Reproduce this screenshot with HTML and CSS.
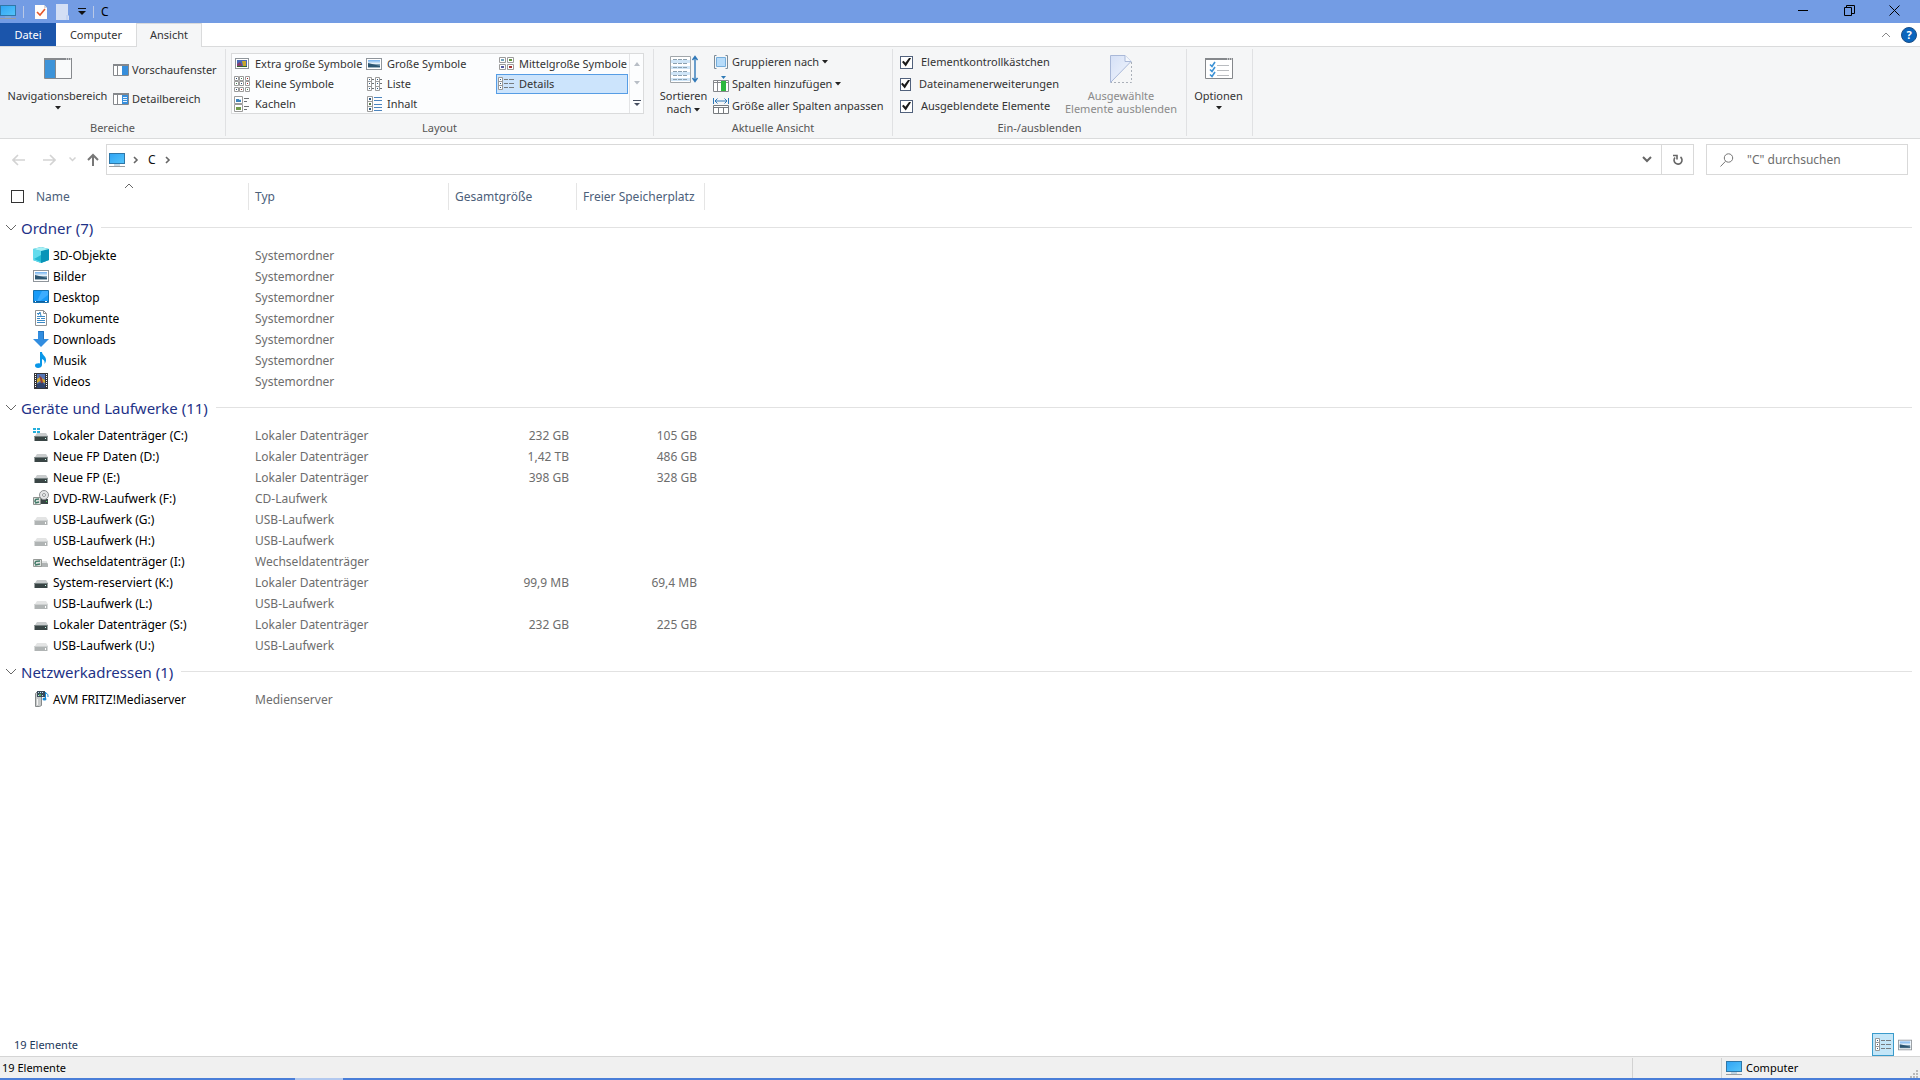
FILE: index.html
```html
<!DOCTYPE html>
<html lang="de">
<head>
<meta charset="utf-8">
<meta name="viewport" content="width=device-width, initial-scale=1">
<title>C</title>
<link rel="stylesheet" href="styles.css">
</head>
<body>
<svg class="defs" aria-hidden="true">
  <defs>
    <linearGradient id="g-screen" x1="0" y1="0" x2="1" y2="1"><stop offset="0" stop-color="#2fa3f4"/><stop offset="1" stop-color="#55c5fa"/></linearGradient>
    <linearGradient id="g-sky" x1="0" y1="0" x2="0" y2="1"><stop offset="0" stop-color="#6fb0f0"/><stop offset=".45" stop-color="#e8f2f8"/><stop offset=".6" stop-color="#5f86a0"/><stop offset="1" stop-color="#a9bcc6"/></linearGradient>
    <linearGradient id="g-hide" x1="0" y1="0" x2="1" y2="1"><stop offset="0" stop-color="#d5e0f6"/><stop offset="1" stop-color="#f2f6fd"/></linearGradient>
  </defs>
  <symbol id="computer" viewBox="0 0 16 16"><rect x=".5" y="1.5" width="15" height="10" fill="url(#g-screen)" stroke="#2f77a8"/><path d="M5 13h6" stroke="#8ab4cf"/><path d="M0 14.500h16" stroke="#9a9da0"/></symbol>
  <symbol id="picture" viewBox="0 0 16 16"><rect x=".5" y="2.500" width="15" height="11" fill="#fff" stroke="#8f959b"/><rect x="2" y="4" width="12" height="8" fill="url(#g-sky)"/><path d="M2 7l4 1 8 2v1H2z" fill="#2c5672"/></symbol>
  <symbol id="mixed" viewBox="0 0 16 16"><rect x="1.500" y="2.500" width="13" height="10" fill="#fff" stroke="#8f959b"/><rect x="3" y="4" width="10" height="7" fill="#4668b8"/><path d="M3 8l3-2 2 3v2H3z" fill="#833f70"/><path d="M8 5h4v5H9z" fill="#c7a62c"/><path d="M3 10h10v1H3z" fill="#346332"/></symbol>
  <symbol id="small" viewBox="0 0 16 16"><path d="M.5.5h4v4h-4zM5.500.5h4v4h-4zM11.500.5h4v4h-4zM.5 5.500h4v4h-4zM5.500 5.500h4v4h-4zM11.500 5.500h4v4h-4zM.5 11.500h4v4h-4zM5.500 11.500h4v4h-4zM11.500 11.500h4v4h-4z" fill="#fff" stroke="#9b9b9b"/><path d="M2 2h1v1H2zM7 7h1v1H7zM2 13h1v1H2z" fill="#27466a"/><path d="M7 2h1v1H7zM2 7h1v1H2zM13 13h1v1h-1z" fill="#408052"/><path d="M13 2h1v1h-1zM13 7h1v1h-1zM7 13h1v1H7z" fill="#a22"/></symbol>
  <symbol id="tiles" viewBox="0 0 16 16"><path d="M.5.5h8v7h-8zM.5 8.500h8v7h-8z" fill="#fff" stroke="#9b9b9b"/><path d="M2 3h5v3H2z" fill="#3e84bd"/><path d="M2 11h5v3H2z" fill="#719b4b"/><path d="M5 3h2v1H5z" fill="#bdddf1"/><path d="M10 2.500h5M10 5.500h3M10 10.500h5M10 13.500h3" stroke="#6d7174"/></symbol>
  <symbol id="list" viewBox="0 0 16 16"><path d="M1.500 1.500h4v13h-4zM1.500 5.500h4M1.500 10.500h4M9.500 1.500h4v13h-4zM9.500 5.500h4M9.500 10.500h4" fill="#fff" stroke="#9b9b9b"/><path d="M3 3h1v1H3zM3 7h1v1H3zM3 12h1v1H3zM11 3h1v1h-1zM11 7h1v1h-1zM11 12h1v1h-1z" fill="#315c83"/><path d="M6 3.500h2M6 7.500h2M6 12.500h2M14 3.500h2M14 7.500h2M14 12.500h2" stroke="#6d7174"/></symbol>
  <symbol id="content" viewBox="0 0 16 16"><path d="M1.500.5h5v15h-5zM1.500 5.500h5M1.500 10.500h5" fill="#fff" stroke="#9b9b9b"/><path d="M3 2h2v2H3zM3 12h2v2H3z" fill="#315c83"/><path d="M3 7h2v2H3z" fill="#557949"/><path d="M8 1.500h8M8 4.500h8M8 8.500h8M8 11.500h8M8 14.500h8" stroke="#4c84bd"/></symbol>
  <symbol id="medium" viewBox="0 0 16 16"><path d="M1.500 1.500h6v5h-6zM9.500 1.500h6v5h-6zM1.500 8.500h6v5h-6zM9.500 8.500h6v5h-6z" fill="#fff" stroke="#9b9b9b"/><path d="M3 3h3v2H3z" fill="#74a3bc"/><path d="M11 3h3v2h-3z" fill="#63953e"/><path d="M3 10h3v2H3z" fill="#5359a0"/><path d="M11 10h3v2h-3z" fill="#a53232"/></symbol>
  <symbol id="details" viewBox="0 0 16 16"><path d="M.5 1.500h4v12h-4zM.5 5.500h4M.5 9.500h4" fill="#fff" stroke="#999"/><path d="M2 3h1v1H2zM2 7h1v1H2zM2 11h1v1H2z" fill="#315c83"/><path d="M6 3.500h4M11 3.500h5M6 7.500h4M11 7.500h5M6 11.500h4M11 11.500h5" stroke="#777c80"/></symbol>
  <symbol id="navpane" viewBox="0 0 28 22"><path d="M.5.5h27v20H.5z" fill="#f9fafb" stroke="#86898d"/><path d="M0 0h28v2H0z" fill="#86898d"/><path d="M1 2h10v18H1z" fill="#3d93d8"/><path d="M11.500 2v18" stroke="#86898d"/><path d="M22 1h1M24 1h1M26 1h1" stroke="#fff"/></symbol>
  <symbol id="preview" viewBox="0 0 16 12"><path d="M.5.5h15v11H.5z" fill="#fff" stroke="#85888c"/><path d="M0 0h16v2H0zM4 2h1v9H4z" fill="#85888c"/><path d="M9 2h6v9H9z" fill="#378edb"/></symbol>
  <symbol id="detailpane" viewBox="0 0 16 12"><path d="M.5.5h15v11H.5z" fill="#fff" stroke="#85888c"/><path d="M0 0h16v2H0zM4 2h1v9H4z" fill="#85888c"/><path d="M9 2h6v9H9z" fill="#378edb"/><path d="M10 4.500h4M10 6.500h4M10 8.500h4" stroke="#e6f3ff"/></symbol>
  <symbol id="sort" viewBox="0 0 28 28"><path d="M.5 1.500h20v26H.5z" fill="#fff" stroke="#a1a6aa"/><path d="M1 5h19v3H1zM1 11h19v3H1zM1 17h19v3H1zM1 23h19v3H1z" fill="#cfe5f7"/><path d="M3 4.500h15M3 8.500h15M3 12.500h15M3 16.500h15M3 20.500h15M3 24.500h15" stroke="#8ca0af" stroke-dasharray="4 1"/><path d="M25 2v24M22.500 5L25 1.500 27.500 5M22.500 23l2.500 3.500 2.500-3.500" fill="none" stroke="#2f78b8" stroke-width="1.400"/></symbol>
  <symbol id="group" viewBox="0 0 16 16"><path d="M3.500 1.500h-2v13h2M12.500 1.500h2v13h-2" fill="none" stroke="#7b8b98"/><path d="M3.500 3.500h9v9h-9z" fill="#b7dcfa" stroke="#76aedb"/></symbol>
  <symbol id="addcol" viewBox="0 0 16 16"><path d="M.5 4.500h15v11H.5zM4.500 4v12M.5 6.500h15" fill="#fff" stroke="#85888c"/><path d="M8 5h5v10H8z" fill="#2cb83d"/><path d="M8 0h5l-2.500 3z" fill="#2e7ab6"/></symbol>
  <symbol id="fitcol" viewBox="0 0 16 16"><path d="M.5 0v6M15.500 0v6M2 3h12M4.500.5L2 3l2.500 2.500M11.500.5L14 3l-2.500 2.500" fill="none" stroke="#2e78b8"/><path d="M.5 7.500h15v8H.5zM.5 9.500h15M5.500 9v6M10.500 9v6" fill="#fff" stroke="#777b7f"/></symbol>
  <symbol id="hide" viewBox="0 0 22 28"><path d="M.5.5H15l6 6L.5 27.500z" fill="url(#g-hide)" stroke="#a9b8d8"/><path d="M15 .5v6h6" fill="#f5f8fc" stroke="#a9b8d8"/><path d="M21.500 7v20.500H1" fill="none" stroke="#aab0b9" stroke-dasharray="2 2"/></symbol>
  <symbol id="options" viewBox="0 0 28 22"><path d="M.5.5h27v20H.5z" fill="#fff" stroke="#85888c"/><path d="M0 0h28v2H0z" fill="#85888c"/><path d="M22 1h1M24 1h1M26 1h1" stroke="#fff"/><path d="M5 6.500l2 2L10 4M5 11.500l2 2L10 9M5 16.500l2 2L10 14" fill="none" stroke="#3c92d6" stroke-width="1.600"/><path d="M12 7.500h12M12 12.500h12M12 17.500h12" stroke="#b9bcc0"/></symbol>
  <symbol id="down" viewBox="0 0 6 4"><path d="M0 0h6L3 3.500z" fill="currentColor"/></symbol>
  <symbol id="objects" viewBox="0 0 16 16"><path d="M0 2l8-2 8 2v11l-8 3-8-3z" fill="#14a5c6"/><path d="M0 2l8 2v12l-8-3z" fill="#63dced"/><path d="M8 4l8-2v11l-8 3z" fill="#0994b8"/><path d="M0 2l8-2 8 2-8 2z" fill="#a8f1f5"/><path d="M1 12l7-4v7z" fill="#24b8d2"/></symbol>
  <symbol id="desktop" viewBox="0 0 16 16"><path d="M.5 1.500h15v12H.5z" fill="#199bf8" stroke="#1470ae"/><path d="M9 2h6v4l-8 6H4z" fill="#3cadff"/><path d="M1 12.500h14" stroke="#0b60a3"/><path d="M2 12h1v1H2zM12 12h2v1h-2z" fill="#fff"/></symbol>
  <symbol id="document" viewBox="0 0 16 16"><path d="M2.500.5h8l3 3v12h-11z" fill="#fff" stroke="#8f9294"/><path d="M10.500.5v3h3" fill="none" stroke="#8f9294"/><path d="M4 3.500h3M4 6.500h8M4 8.500h3M8 8.500h4M4 10.500h8M4 12.500h8" stroke="#3b8ac6"/><path d="M5 5l2-3 1 4" fill="none" stroke="#3b8ac6"/></symbol>
  <symbol id="download" viewBox="0 0 16 16"><path d="M5 0h6v8h5l-8 8-8-8h5z" fill="#318de0"/><path d="M5.500.5h5v8" fill="none" stroke="#2375bf"/></symbol>
  <symbol id="music" viewBox="0 0 16 16"><path d="M7 0h2c0 3 4 4 4 8 0 1-.5 3-1.500 4 .5-3-.5-4-2.500-5v6c0 2-2 3-4 3s-3-1-3-2.500C2 12 4 11 7 11.500z" fill="#0997e8"/></symbol>
  <symbol id="video" viewBox="0 0 16 16"><path d="M1 0h14v16H1z" fill="#35363b"/><path d="M4 1h8v14H4z" fill="#5575b5"/><path d="M4 6l3-2 5 3v3l-5-2-3 2z" fill="#d3ad33"/><path d="M4 11l5-2 3 3v3H4z" fill="#31446d"/><path d="M6 2l3 3 1 5H8z" fill="#923d39"/><path d="M2.500 1v14M13.500 1v14" stroke="#fff" stroke-dasharray="1 1"/></symbol>
  <symbol id="drive" viewBox="0 0 16 16"><path d="M4 6h9l2 3H2z" fill="#c9cccd"/><path d="M1.500 9h13v5h-13z" fill="#394545"/><path d="M1.500 9h13v1h-13z" fill="#758080"/><path d="M12 11h1v1h-1z" fill="#cfe"/></symbol>
  <symbol id="usb" viewBox="0 0 16 16"><path d="M4 6h9l2 3H2z" fill="#e3e4e4"/><path d="M1.500 9h13v5h-13z" fill="#b0b4b4"/><path d="M1.500 9h13v1h-13z" fill="#cdd0d0"/><path d="M12 11h1v2h-1z" fill="#fff"/></symbol>
  <symbol id="sysdrive" viewBox="0 0 16 16"><use href="#drive"/><path d="M0 1h3v2H0zM4 1h3v2H4zM0 4h3v2H0zM4 4h3v2H4z" fill="#25afdc"/></symbol>
  <symbol id="dvd" viewBox="0 0 16 16"><path d="M6 9h9v5H6z" fill="#394545"/><circle cx="11" cy="5" r="4.500" fill="#e5e6e7" stroke="#8e9092"/><circle cx="11" cy="5" r="1.500" fill="#fff" stroke="#96999b"/><path d="M.5 7.500h7v7h-7z" fill="#dfe2df" stroke="#8d918e"/><path d="M2 12c0-3 1-3 4-3M2 13l4-1" fill="none" stroke="#3e7866" stroke-width="1.500"/><path d="M13 11h1v1h-1z" fill="#50e160"/></symbol>
  <symbol id="removable" viewBox="0 0 16 16"><path d="M7 8h6l2 3v3H7z" fill="#b0b4b4"/><path d="M8 8h5l1 2H7z" fill="#e0e2e2"/><path d="M.5 6.500h8v7h-8z" fill="#dfe2df" stroke="#969a97"/><path d="M2 11c0-3 1-3 5-3M2 12l5-1" fill="none" stroke="#3e7866" stroke-width="1.500"/></symbol>
  <symbol id="media" viewBox="0 0 16 16"><path d="M2.500 2.500l2-2h4v14l-2 1h-4z" fill="#c7caca" stroke="#85898a"/><path d="M4.500 8v6" stroke="#f4f4f4"/><path d="M4 0h8v6H4z" fill="#384957"/><path d="M5 1h1v1H5zM7 1h1v1H7zM9 1h1v1H9zM5 4h1v1H5zM9 4h1v1H9z" fill="#b8dff4"/><path d="M6 3h2v2H6z" fill="#58a860"/><path d="M12.500 1v7M13 2c2 1 2 2 2 4" fill="none" stroke="#1688d4"/><ellipse cx="11.500" cy="8" rx="2" ry="1.500" fill="#1688d4"/></symbol>
  <symbol id="chev-right" viewBox="0 0 6 8"><path d="M1 1l3 3-3 3" fill="none" stroke="currentColor" stroke-width="1.600"/></symbol>
  <symbol id="chev-down" viewBox="0 0 12 8"><path d="M1 1l5 5 5-5" fill="none" stroke="currentColor"/></symbol>
  <symbol id="chev-up" viewBox="0 0 10 6"><path d="M1 5l4-4 4 4" fill="none" stroke="currentColor"/></symbol>
  <symbol id="arrow" viewBox="0 0 14 12"><path d="M1 6h12M6 1L1 6l5 5" fill="none" stroke="currentColor" stroke-width="1.600"/></symbol>
</svg>

<div class="window">
  <header class="titlebar">
    <svg class="i16"><use href="#computer"/></svg>
    <span class="tick"></span>
    <button class="quick" aria-label="Eigenschaften"><svg width="12" height="14" viewBox="0 0 12 14"><path d="M0 0h9l3 3v11H0z" fill="#fffdfb"/><path d="M9 0v3h3" fill="#dcd8d6"/><path d="M2 7l3 3 5-6" fill="none" stroke="#e4572b" stroke-width="1.600"/></svg></button>
    <button class="quick" aria-label="Neuer Ordner"><svg width="13" height="16" viewBox="0 0 13 16"><path d="M0 0h12v11l1 1v4H0z" fill="#d3dff5"/><path d="M11 11v5" stroke="#b5c9ee"/></svg></button>
    <button class="quick quick-more" aria-label="Symbolleiste anpassen"><svg width="8" height="7" viewBox="0 0 8 7"><path d="M0 .5h8" stroke="#111"/><path d="M0 3h8L4 7z" fill="#111"/></svg></button>
    <span class="tick"></span>
    <h1 class="title">C</h1>
    <div class="winbuttons">
      <button aria-label="Minimieren"><svg width="11" height="11" viewBox="0 0 11 11"><path d="M0 5.500h10" stroke="#000"/></svg></button>
      <button aria-label="Verkleinern"><svg width="11" height="11" viewBox="0 0 11 11"><path d="M.5 2.500h7v8h-7zM2.500 2V.5h8v8H8" fill="none" stroke="#000"/></svg></button>
      <button aria-label="Schließen"><svg width="11" height="11" viewBox="0 0 11 11"><path d="M.5.5l10 10M10.500.5l-10 10" stroke="#000"/></svg></button>
    </div>
  </header>

  <nav class="tabs">
    <button class="tab tab-file">Datei</button>
    <button class="tab tab-computer">Computer</button>
    <button class="tab tab-active">Ansicht</button>
    <div class="tabs-end">
      <button class="collapse" aria-label="Menüband minimieren"><svg width="10" height="6"><use href="#chev-up"/></svg></button>
      <button class="help" aria-label="Hilfe">?</button>
    </div>
  </nav>

  <div class="ribbon">
    <section class="rgroup g-panes">
      <div class="rbody">
        <button class="big big-nav"><svg class="i28"><use href="#navpane"/></svg><span>Navigationsbereich</span><svg class="caret"><use href="#down"/></svg></button>
        <div class="stack stack-wide">
          <button class="cmd"><svg width="16" height="12"><use href="#preview"/></svg>Vorschaufenster</button>
          <button class="cmd"><svg width="16" height="12"><use href="#detailpane"/></svg>Detailbereich</button>
        </div>
      </div>
      <h2>Bereiche</h2>
    </section>
    <section class="rgroup g-layout">
      <div class="rbody">
        <div class="gallery">
          <div class="views">
            <button class="view"><svg class="i16"><use href="#mixed"/></svg>Extra große Symbole</button>
            <button class="view"><svg class="i16"><use href="#picture"/></svg>Große Symbole</button>
            <button class="view"><svg class="i16"><use href="#medium"/></svg>Mittelgroße Symbole</button>
            <button class="view"><svg class="i16"><use href="#small"/></svg>Kleine Symbole</button>
            <button class="view"><svg class="i16"><use href="#list"/></svg>Liste</button>
            <button class="view view-on"><svg class="i16"><use href="#details"/></svg>Details</button>
            <button class="view"><svg class="i16"><use href="#tiles"/></svg>Kacheln</button>
            <button class="view"><svg class="i16"><use href="#content"/></svg>Inhalt</button>
          </div>
          <div class="spinner">
            <button class="off" aria-label="Nach oben"><svg width="6" height="4" viewBox="0 0 6 4"><path d="M0 4h6L3 0z" fill="currentColor"/></svg></button>
            <button class="off" aria-label="Nach unten"><svg class="caret"><use href="#down"/></svg></button>
            <button aria-label="Mehr"><svg width="8" height="7" viewBox="0 0 8 7"><path d="M0 .5h8" stroke="currentColor"/><path d="M1 3h6L4 6z" fill="currentColor"/></svg></button>
          </div>
        </div>
      </div>
      <h2>Layout</h2>
    </section>
    <section class="rgroup g-current">
      <div class="rbody">
        <button class="big big-sort"><svg class="i28 tall"><use href="#sort"/></svg><span>Sortieren<br>nach <svg class="caret"><use href="#down"/></svg></span></button>
        <div class="stack">
          <button class="cmd"><svg class="i16"><use href="#group"/></svg>Gruppieren nach <svg class="caret"><use href="#down"/></svg></button>
          <button class="cmd"><svg class="i16"><use href="#addcol"/></svg>Spalten hinzufügen <svg class="caret"><use href="#down"/></svg></button>
          <button class="cmd"><svg class="i16"><use href="#fitcol"/></svg>Größe aller Spalten anpassen</button>
        </div>
      </div>
      <h2>Aktuelle Ansicht</h2>
    </section>
    <section class="rgroup g-show">
      <div class="rbody">
        <div class="stack">
          <label class="check"><input type="checkbox" checked>Elementkontrollkästchen</label>
          <label class="check"><input type="checkbox" checked>Dateinamenerweiterungen</label>
          <label class="check"><input type="checkbox" checked>Ausgeblendete Elemente</label>
        </div>
        <button class="big big-hide" disabled><svg class="i28 tall"><use href="#hide"/></svg><span>Ausgewählte<br>Elemente ausblenden</span></button>
      </div>
      <h2>Ein-/ausblenden</h2>
    </section>
    <section class="rgroup g-options">
      <div class="rbody">
        <button class="big"><svg class="i28"><use href="#options"/></svg><span>Optionen</span><svg class="caret"><use href="#down"/></svg></button>
      </div>
    </section>
  </div>

  <div class="addressbar">
    <div class="history">
      <button class="pale" aria-label="Zurück"><svg width="14" height="12"><use href="#arrow"/></svg></button>
      <button class="pale" aria-label="Vorwärts"><svg class="flip" width="14" height="12"><use href="#arrow"/></svg></button>
      <button class="pale recent" aria-label="Zuletzt besucht"><svg width="7" height="5" viewBox="0 0 7 5"><path d="M.5.5l3 3 3-3" fill="none" stroke="currentColor" stroke-width="1.500"/></svg></button>
      <button class="up" aria-label="Nach oben"><svg width="12" height="14" viewBox="0 0 12 14"><path d="M6 13V2M1 7l5-5 5 5" fill="none" stroke="currentColor" stroke-width="2"/></svg></button>
    </div>
    <div class="path">
      <svg class="i16"><use href="#computer"/></svg>
      <svg class="sep" width="6" height="8"><use href="#chev-right"/></svg>
      <a href="#c">C</a>
      <svg class="sep" width="6" height="8"><use href="#chev-right"/></svg>
      <button class="drop" aria-label="Verlauf"><svg width="10" height="7" viewBox="0 0 10 7"><path d="M1 1l4 4 4-4" fill="none" stroke="currentColor" stroke-width="2"/></svg></button>
      <button class="reload" aria-label="Aktualisieren"><svg width="12" height="12" viewBox="0 0 12 12"><path d="M8.500 3A4 4 0 1 1 3 3.500M1 1.500h4v4" fill="none" stroke="currentColor" stroke-width="1.600"/></svg></button>
    </div>
    <label class="search">
      <svg width="14" height="14" viewBox="0 0 14 14"><circle cx="8.500" cy="5" r="4.200" fill="none" stroke="#777"/><path d="M5.500 8.300L.5 13.500" stroke="#777"/></svg>
      <input type="text" placeholder="&quot;C&quot; durchsuchen" aria-label="C durchsuchen">
    </label>
  </div>

  <main class="files">
    <table>
      <colgroup><col class="c-name"><col class="c-type"><col class="c-size"><col class="c-size"><col></colgroup>
      <thead>
        <tr>
          <th><div class="head head-name"><input type="checkbox" aria-label="Alle auswählen">Name<svg class="sorted" width="10" height="6"><use href="#chev-up"/></svg></div></th>
          <th><div class="head">Typ</div></th>
          <th><div class="head">Gesamtgröße</div></th>
          <th><div class="head">Freier Speicherplatz</div></th>
          <td></td>
        </tr>
      </thead>
      <tbody>
        <tr class="group"><th colspan="5"><div class="ghead"><svg width="12" height="8"><use href="#chev-down"/></svg>Ordner (7)</div></th></tr>
        <tr><td><div class="name"><svg class="i16"><use href="#objects"/></svg>3D-Objekte</div></td><td>Systemordner</td><td></td><td></td></tr>
        <tr><td><div class="name"><svg class="i16"><use href="#picture"/></svg>Bilder</div></td><td>Systemordner</td><td></td><td></td></tr>
        <tr><td><div class="name"><svg class="i16"><use href="#desktop"/></svg>Desktop</div></td><td>Systemordner</td><td></td><td></td></tr>
        <tr><td><div class="name"><svg class="i16"><use href="#document"/></svg>Dokumente</div></td><td>Systemordner</td><td></td><td></td></tr>
        <tr><td><div class="name"><svg class="i16"><use href="#download"/></svg>Downloads</div></td><td>Systemordner</td><td></td><td></td></tr>
        <tr><td><div class="name"><svg class="i16"><use href="#music"/></svg>Musik</div></td><td>Systemordner</td><td></td><td></td></tr>
        <tr><td><div class="name"><svg class="i16"><use href="#video"/></svg>Videos</div></td><td>Systemordner</td><td></td><td></td></tr>
      </tbody>
      <tbody>
        <tr class="group"><th colspan="5"><div class="ghead"><svg width="12" height="8"><use href="#chev-down"/></svg>Geräte und Laufwerke (11)</div></th></tr>
        <tr><td><div class="name"><svg class="i16"><use href="#sysdrive"/></svg>Lokaler Datenträger (C:)</div></td><td>Lokaler Datenträger</td><td>232 GB</td><td>105 GB</td></tr>
        <tr><td><div class="name"><svg class="i16"><use href="#drive"/></svg>Neue FP Daten (D:)</div></td><td>Lokaler Datenträger</td><td>1,42 TB</td><td>486 GB</td></tr>
        <tr><td><div class="name"><svg class="i16"><use href="#drive"/></svg>Neue FP (E:)</div></td><td>Lokaler Datenträger</td><td>398 GB</td><td>328 GB</td></tr>
        <tr><td><div class="name"><svg class="i16"><use href="#dvd"/></svg>DVD-RW-Laufwerk (F:)</div></td><td>CD-Laufwerk</td><td></td><td></td></tr>
        <tr><td><div class="name"><svg class="i16"><use href="#usb"/></svg>USB-Laufwerk (G:)</div></td><td>USB-Laufwerk</td><td></td><td></td></tr>
        <tr><td><div class="name"><svg class="i16"><use href="#usb"/></svg>USB-Laufwerk (H:)</div></td><td>USB-Laufwerk</td><td></td><td></td></tr>
        <tr><td><div class="name"><svg class="i16"><use href="#removable"/></svg>Wechseldatenträger (I:)</div></td><td>Wechseldatenträger</td><td></td><td></td></tr>
        <tr><td><div class="name"><svg class="i16"><use href="#drive"/></svg>System-reserviert (K:)</div></td><td>Lokaler Datenträger</td><td>99,9 MB</td><td>69,4 MB</td></tr>
        <tr><td><div class="name"><svg class="i16"><use href="#usb"/></svg>USB-Laufwerk (L:)</div></td><td>USB-Laufwerk</td><td></td><td></td></tr>
        <tr><td><div class="name"><svg class="i16"><use href="#drive"/></svg>Lokaler Datenträger (S:)</div></td><td>Lokaler Datenträger</td><td>232 GB</td><td>225 GB</td></tr>
        <tr><td><div class="name"><svg class="i16"><use href="#usb"/></svg>USB-Laufwerk (U:)</div></td><td>USB-Laufwerk</td><td></td><td></td></tr>
      </tbody>
      <tbody>
        <tr class="group"><th colspan="5"><div class="ghead"><svg width="12" height="8"><use href="#chev-down"/></svg>Netzwerkadressen (1)</div></th></tr>
        <tr><td><div class="name"><svg class="i16"><use href="#media"/></svg>AVM FRITZ!Mediaserver</div></td><td>Medienserver</td><td></td><td></td></tr>
      </tbody>
    </table>
  </main>

  <div class="infobar">
    <span>19 Elemente</span>
    <div class="modes">
      <button class="mode mode-on" aria-label="Details"><svg class="i16"><use href="#details"/></svg></button>
      <button class="mode" aria-label="Große Symbole"><svg width="14" height="14"><use href="#picture"/></svg></button>
    </div>
  </div>
  <footer class="statusbar">
    <span class="count">19 Elemente</span>
    <span class="zone"><svg class="i16"><use href="#computer"/></svg>Computer</span>
    <svg class="grip" width="8" height="8" viewBox="0 0 8 8"><path d="M6 0h2v2H6zM3 3h2v2H3zM6 3h2v2H6zM0 6h2v2H0zM3 6h2v2H3zM6 6h2v2H6z" fill="#b9b9b9"/></svg>
  </footer>
  <div class="edge"><span></span></div>
</div>
</body>
</html>
```
FILE: styles.css
```css
* { box-sizing: border-box; }
body {
  margin: 0;
  font: 12px/16px "Noto Sans", "Open Sans", sans-serif;
  color: #000;
  background: #fff;
}
button, input { font: inherit; color: inherit; }
button { padding: 0; border: 0; background: none; }
h1, h2 { margin: 0; font: inherit; }
svg { flex: none; display: block; }
.defs { position: absolute; width: 0; height: 0; }
.i16 { width: 16px; height: 16px; }
.i28 { width: 28px; height: 22px; }
.caret { width: 6px; height: 4px; }
.window { min-height: 100vh; display: flex; flex-direction: column; }

/* Title bar */
.titlebar { height: 23px; display: flex; align-items: center; background: #739ce4; }
.tick { width: 1px; height: 12px; margin-left: 7px; background: #b9c8e6; }
.quick { margin-left: 11px; }
.quick + .quick { margin-left: 9px; }
.title { margin-left: 7px; line-height: 23px; }
.winbuttons { display: flex; margin-left: auto; align-self: stretch; padding: 0 4px 3px 0; }
.winbuttons button { width: 46px; display: grid; place-items: center; }
.winbuttons button:last-child { width: 44px; }

/* Tabs */
.tabs { height: 24px; display: flex; font-size: 11px; color: #333; border-bottom: 1px solid #dadbdc; }
.tab { height: 23px; }
.tab-file { width: 56px; background: #1b55ab; color: #fff; }
.tab-computer { width: 80px; }
.tab-active { width: 66px; height: 24px; padding-bottom: 2px; background: #f5f6f7; border: solid #dadbdc; border-width: 1px 1px 0; }
.tabs-end { display: flex; align-items: center; gap: 10px; margin-left: auto; padding-right: 3px; }
.collapse { color: #888; }
.help { width: 16px; height: 16px; border-radius: 50%; background: #0a65bd; border: 1px solid #1d4f86; color: #fff; font-weight: 700; line-height: 14px; }

/* Ribbon */
.ribbon { height: 92px; display: flex; padding-top: 2px; background: #f5f6f7; border-bottom: 1px solid #dadbdc; font-size: 11px; color: #333; }
.rgroup { display: flex; flex-direction: column; height: 87px; border-right: 1px solid #e0e1e3; }
.rbody { display: flex; height: 72px; padding-top: 2px; }
.rgroup h2 { text-align: center; color: #555; }
.g-panes { width: 226px; }
.g-layout { width: 428px; }
.g-current { width: 239px; }
.g-show { width: 294px; }
.g-options { width: 66px; }
.big { display: flex; flex-direction: column; align-items: center; padding-top: 7px; line-height: 13px; }
.big > span { margin: 9px 0 4px; }
.big .caret { color: #222; }
.big span .caret, .cmd .caret { display: inline-block; vertical-align: middle; color: #222; }
.tall { height: 28px; }
.big-nav { width: 113px; padding-left: 2px; }
.big-sort { width: 59px; padding-top: 4px; }
.big-sort > span, .big-hide > span { margin-top: 6px; }
.big-hide { padding-top: 4px; width: 130px; color: #8a8a8a; }
.g-options .big { width: 63px; }
.stack { display: flex; flex-direction: column; }
.stack-wide { padding-top: 4px; }
.cmd, .check { display: flex; align-items: center; height: 22px; white-space: nowrap; gap: 3px; }
.stack-wide .cmd { height: 29px; }
.g-show .stack { width: 163px; padding-left: 7px; }
.check { gap: 8px; }
.check input, .head-name input { appearance: none; width: 13px; height: 13px; margin: 0; border: 1px solid #51617c; background: #fff; }
.check input { display: grid; place-items: center; }
.check input:checked::before { content: ""; width: 9px; height: 9px; background: #1a1a1a; clip-path: polygon(0 50%, 18% 36%, 38% 58%, 82% 0, 100% 8%, 42% 100%); }
.gallery { display: flex; width: 413px; height: 61px; margin-left: 5px; background: #fcfdfe; border: 1px solid #dadbdc; margin-top: 2px; }
.views { display: grid; grid-template-columns: repeat(3, 132px); grid-auto-rows: 20px; width: 397px; }
.view { display: flex; align-items: center; gap: 5px; padding: 0 0 1px 1px; white-space: nowrap; border: 1px solid transparent; }
.view-on { background: #cce4fc; border-color: #569de5; }
.spinner { flex: 1; display: grid; grid-template-rows: repeat(3, 1fr); border-left: 1px solid #e3e4e6; color: #444e60; }
.spinner button { display: grid; place-items: center; }
.spinner .off { color: #b8bec6; }

/* Address bar */
.addressbar { display: flex; padding: 5px 12px 0 0; height: 36px; }
.history { width: 106px; display: flex; align-items: center; padding-left: 12px; color: #777; }
.history .pale { color: #d3d3d3; }
.history button + button { margin-left: 16px; }
.history .recent { margin-left: 13px; }
.history .recent + .up { margin-left: 11px; }
.flip { transform: scaleX(-1); }
.path { flex: 1; height: 31px; display: flex; align-items: center; border: 1px solid #d9d9d9; color: #666; padding-left: 2px; }
.path a { color: #111; text-decoration: none; margin: 0 9px; }
.sep { margin-left: 8px; }
.path a + .sep { margin-left: 0; }
.drop { margin-left: auto; width: 28px; display: grid; place-items: center; }
.reload { width: 32px; align-self: stretch; display: grid; place-items: center; border-left: 1px solid #d9d9d9; }
.search { width: 202px; height: 31px; margin-left: 12px; padding-left: 13px; display: flex; align-items: center; gap: 13px; border: 1px solid #d9d9d9; }
.search input { width: 140px; border: 0; padding: 0; outline: 0; }
.search input::placeholder { color: #6d6d6d; opacity: 1; }

/* File list */
.files { flex: 1; padding-top: 8px; }
table { width: 100%; table-layout: fixed; border-collapse: collapse; }
.c-name { width: 249px; }
.c-type { width: 200px; }
.c-size { width: 128px; }
th, td { padding: 0; font-weight: 400; text-align: left; }
.head { height: 27px; padding-left: 6px; display: flex; align-items: center; color: #4c607a; border-right: 1px solid #e5e5e5; white-space: nowrap; }
.head-name { position: relative; padding-left: 11px; gap: 12px; }
.head-name input { border-color: #333; }
.sorted { position: absolute; left: 124px; top: 0; color: #666; }
thead tr { height: 29px; vertical-align: top; }
tbody tr { height: 21px; }
tbody .group { height: 33px; }
.group th { padding-bottom: 2px; }
tbody td { color: #6d6d6d; padding-left: 6px; }
tbody td:first-child { padding-left: 33px; }
td:nth-child(n+3) { text-align: right; padding-right: 8px; }
.name { display: flex; align-items: center; gap: 4px; color: #000; white-space: nowrap; }
.name svg { margin: -2px 0 0; }
.ghead { display: flex; align-items: center; padding: 0 8px 0 5px; gap: 4px; font-size: 15px; line-height: 20px; color: #1e3287; }
.ghead svg { color: #666; }
.ghead::after { content: ""; flex: 1; height: 1px; margin-left: 4px; background: #e2e2e2; }

/* Bottom bars */
.infobar { display: flex; justify-content: space-between; align-items: center; height: 23px; padding: 0 8px 0 14px; font-size: 11px; color: #1e395b; }
.modes { display: flex; align-items: center; gap: 4px; }
.mode { display: grid; place-items: center; }
.mode-on { width: 22px; height: 23px; background: #c4e6f8; border: 1px solid #3a9bcb; }
.statusbar { display: flex; align-items: center; height: 22px; background: #f0f0f0; border-top: 1px solid #d5d5d5; font-size: 11px; }
.count { flex: 1; padding-left: 2px; }
.zone { display: flex; align-items: center; gap: 4px; width: 278px; height: 20px; border-left: 1px solid #d2d2d2; }
.zone::before { content: ""; width: 88px; height: 20px; border-right: 1px solid #d2d2d2; }
.grip { align-self: flex-end; margin-right: 2px; }
.edge { height: 2px; background: #4a7ed8; padding-left: 295px; }
.edge span { display: block; width: 48px; height: 2px; background: #b3c9ef; }
```
